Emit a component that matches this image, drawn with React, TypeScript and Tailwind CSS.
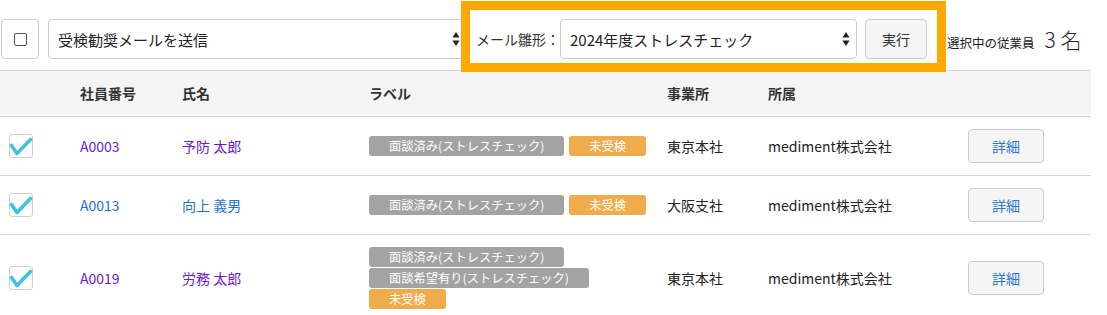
import React from "react";

const SelectArrows = () => (
  <svg width="8" height="16" viewBox="0 0 8 16" className="shrink-0">
    <path d="M4 1 L7.5 6.5 L0.5 6.5 Z" fill="#222" />
    <path d="M4 15 L7.5 9.5 L0.5 9.5 Z" fill="#222" />
  </svg>
);

const CheckBox = () => (
  <div className="w-[24px] h-[24px] rounded-[3px] border border-[#cfcfcf] bg-white relative">
    <svg width="24" height="24" viewBox="0 0 24 24" className="absolute left-[-1px] top-[-1px]">
      <path d="M2.5 11.5 L8 19.5 L21.5 5.5" fill="none" stroke="#3fc3dc" strokeWidth="3.6" strokeLinecap="round" strokeLinejoin="round" />
    </svg>
  </div>
);

const Badge = ({ children, orange }: { children: React.ReactNode; orange?: boolean }) => (
  <span
    className={
      "inline-flex items-center h-[20px] px-[20px] rounded-[3px] text-[12.25px] leading-none text-white whitespace-nowrap " +
      (orange ? "bg-[#f0ab4a]" : "bg-[#a3a3a3]")
    }
  >
    {children}
  </span>
);

type Row = {
  id: string;
  name: string;
  visited: boolean;
  labels: { text: string; orange?: boolean }[];
  office: string;
  dept: string;
};

const rows: Row[] = [
  {
    id: "A0003",
    name: "予防 太郎",
    visited: true,
    labels: [{ text: "面談済み(ストレスチェック)" }, { text: "未受検", orange: true }],
    office: "東京本社",
    dept: "mediment株式会社",
  },
  {
    id: "A0013",
    name: "向上 義男",
    visited: false,
    labels: [{ text: "面談済み(ストレスチェック)" }, { text: "未受検", orange: true }],
    office: "大阪支社",
    dept: "mediment株式会社",
  },
  {
    id: "A0019",
    name: "労務 太郎",
    visited: true,
    labels: [
      { text: "面談済み(ストレスチェック)" },
      { text: "面談希望有り(ストレスチェック)" },
      { text: "未受検", orange: true },
    ],
    office: "東京本社",
    dept: "mediment株式会社",
  },
];

const cols = "grid grid-cols-[80px_102px_187px_298px_101px_200px_123px]";

export default function App() {
  return (
    <div className="w-[1107px] h-[315px] overflow-hidden bg-white font-['Noto_Sans_CJK_JP','Noto_Sans',sans-serif] text-[#222] relative">
      <div className="w-[1091px]">
        {/* top bar */}
        <div className="flex items-center pt-[19px] pb-[11px] border-b border-[#d6d6d6] whitespace-nowrap">
          <div className="shrink-0 ml-[1px] w-[38px] h-[40px] rounded-[4px] border border-[#cccccc] flex items-center justify-center">
            <div className="w-[13px] h-[13px] rounded-[2px] border-[1.5px] border-[#555]" />
          </div>
          <div className="shrink-0 ml-[9px] w-[416px] h-[40px] rounded-[4px] border border-[#cccccc] flex items-center justify-between pl-[9px] pr-[3px]">
            <span className="text-[15px] leading-none">受検勧奨メールを送信</span>
            <SelectArrows />
          </div>
          <span className="shrink-0 ml-[12px] w-[84px] text-[14px] leading-none text-[#333]">メール雛形：</span>
          <div className="shrink-0 w-[297px] h-[40px] rounded-[4px] border border-[#cccccc] flex items-center justify-between pl-[9px] pr-[6px]">
            <span className="text-[15px] leading-none">2024年度ストレスチェック</span>
            <SelectArrows />
          </div>
          <div className="shrink-0 ml-[8px] w-[62px] h-[40px] rounded-[4px] border border-[#cccccc] bg-[#f5f5f5] flex items-center justify-center text-[14px] text-[#333]">
            実行
          </div>
          <div className="shrink-0 ml-[20px] flex items-baseline">
            <span className="text-[12.5px] leading-none">選択中の従業員</span>
            <span className="ml-[10px] text-[21px] leading-none font-light">3 名</span>
          </div>
        </div>

        {/* header */}
        <div className={cols + " h-[46px] items-center bg-[#f5f5f5] border-b border-[#d6d6d6] text-[14px] font-bold text-[#333]"}>
          <div />
          <div>社員番号</div>
          <div>氏名</div>
          <div>ラベル</div>
          <div>事業所</div>
          <div>所属</div>
          <div />
        </div>

        {/* rows */}
        {rows.map((r) => {
          const link = r.visited ? "text-[#6a1bd1]" : "text-[#1e73d1]";
          return (
            <div key={r.id} className={cols + " items-center py-[12px] border-b border-[#d6d6d6] text-[14px]"}>
              <div className="pl-[9px]">
                <CheckBox />
              </div>
              <div className={link}>{r.id}</div>
              <div className={link}>{r.name}</div>
              <div className="flex flex-wrap gap-x-[5px] gap-y-[1px] w-[285px]">
                {r.labels.map((l, i) => (
                  <Badge key={i} orange={l.orange}>
                    {l.text}
                  </Badge>
                ))}
              </div>
              <div>{r.office}</div>
              <div>{r.dept}</div>
              <div>
                <div className="w-[76px] h-[34px] rounded-[4px] border border-[#cccccc] bg-[#f5f5f5] flex items-center justify-center text-[14px] text-[#2a78d4]">
                  詳細
                </div>
              </div>
            </div>
          );
        })}
      </div>

      {/* highlight frame overlay */}
      <div className="absolute left-[461px] top-[1px] w-[485px] h-[71px] border-[9px] border-[#ffa800] pointer-events-none" />
    </div>
  );
}
